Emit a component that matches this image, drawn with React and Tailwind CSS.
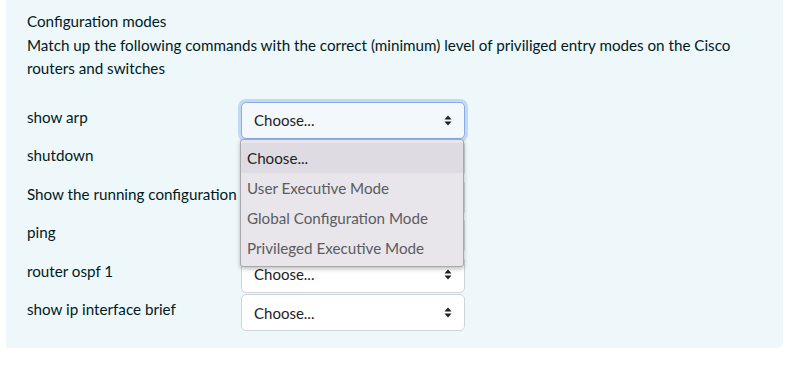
import React from 'react';

const rows = [
  'show arp',
  'shutdown',
  'Show the running configuration',
  'ping',
  'router ospf 1',
  'show ip interface brief',
];

const options = ['Choose...', 'User Executive Mode', 'Global Configuration Mode', 'Privileged Executive Mode'];

function Arrows() {
  return (
    <svg width="8" height="11" viewBox="0 0 8 11" className="shrink-0">
      <path d="M4 0.5 L7.5 4.5 H0.5 Z" fill="#1d2125" />
      <path d="M4 10.5 L7.5 6.5 H0.5 Z" fill="#1d2125" />
    </svg>
  );
}

function Select({ focused }) {
  return (
    <div
      className={
        'w-[224px] h-[37px] rounded-[5px] border flex items-center justify-between pl-[12px] pr-[12px] text-[15px] ' +
        (focused
          ? 'border-[#86aee6] bg-[#f3f8fc] ring-[3px] ring-[#c4d9f1]'
          : 'border-[#ced4da] bg-white')
      }
    >
      <span className="text-[#1d2125]">Choose...</span>
      <Arrows />
    </div>
  );
}

export default function App() {
  return (
    <div className="w-[791px] h-[369px] bg-white" style={{ fontFamily: 'Lato, "Noto Sans", sans-serif' }}>
      <div className="ml-[6px] w-[777px] h-[348px] bg-[#eef7fa] rounded-br-[6px] pl-[21px] pt-[10px] text-[#001a1e] relative">
        <div className="text-[15.2px] leading-[23.5px]">
          <p>Configuration modes</p>
          <p className="w-[720px]">
            Match up the following commands with the correct (minimum) level of priviliged entry modes on the Cisco
            routers and switches
          </p>
        </div>
        <div className="mt-[21px] flex flex-col gap-[1.6px]">
          {rows.map((r, i) => (
            <div key={r} className="flex items-start">
              <div className="w-[214px] text-[15.2px] leading-[24px] pt-[3px] whitespace-nowrap">{r}</div>
              <Select focused={i === 0} />
            </div>
          ))}
        </div>
        <div className="absolute left-[234px] top-[139px] w-[224px] h-[128px] bg-[#e8e6eb] border border-[#a9a9ad] rounded-[3px] shadow-[0_2px_4px_rgba(0,0,0,0.25)] pt-[3px]">
          {options.map((o, i) => (
            <div
              key={o}
              className={
                'h-[30px] flex items-center pl-[6px] text-[15.2px] ' +
                (i === 0 ? 'bg-[#dedce2] text-[#1d2125]' : 'text-[#5b5b60]')
              }
            >
              {o}
            </div>
          ))}
        </div>
      </div>
    </div>
  );
}
